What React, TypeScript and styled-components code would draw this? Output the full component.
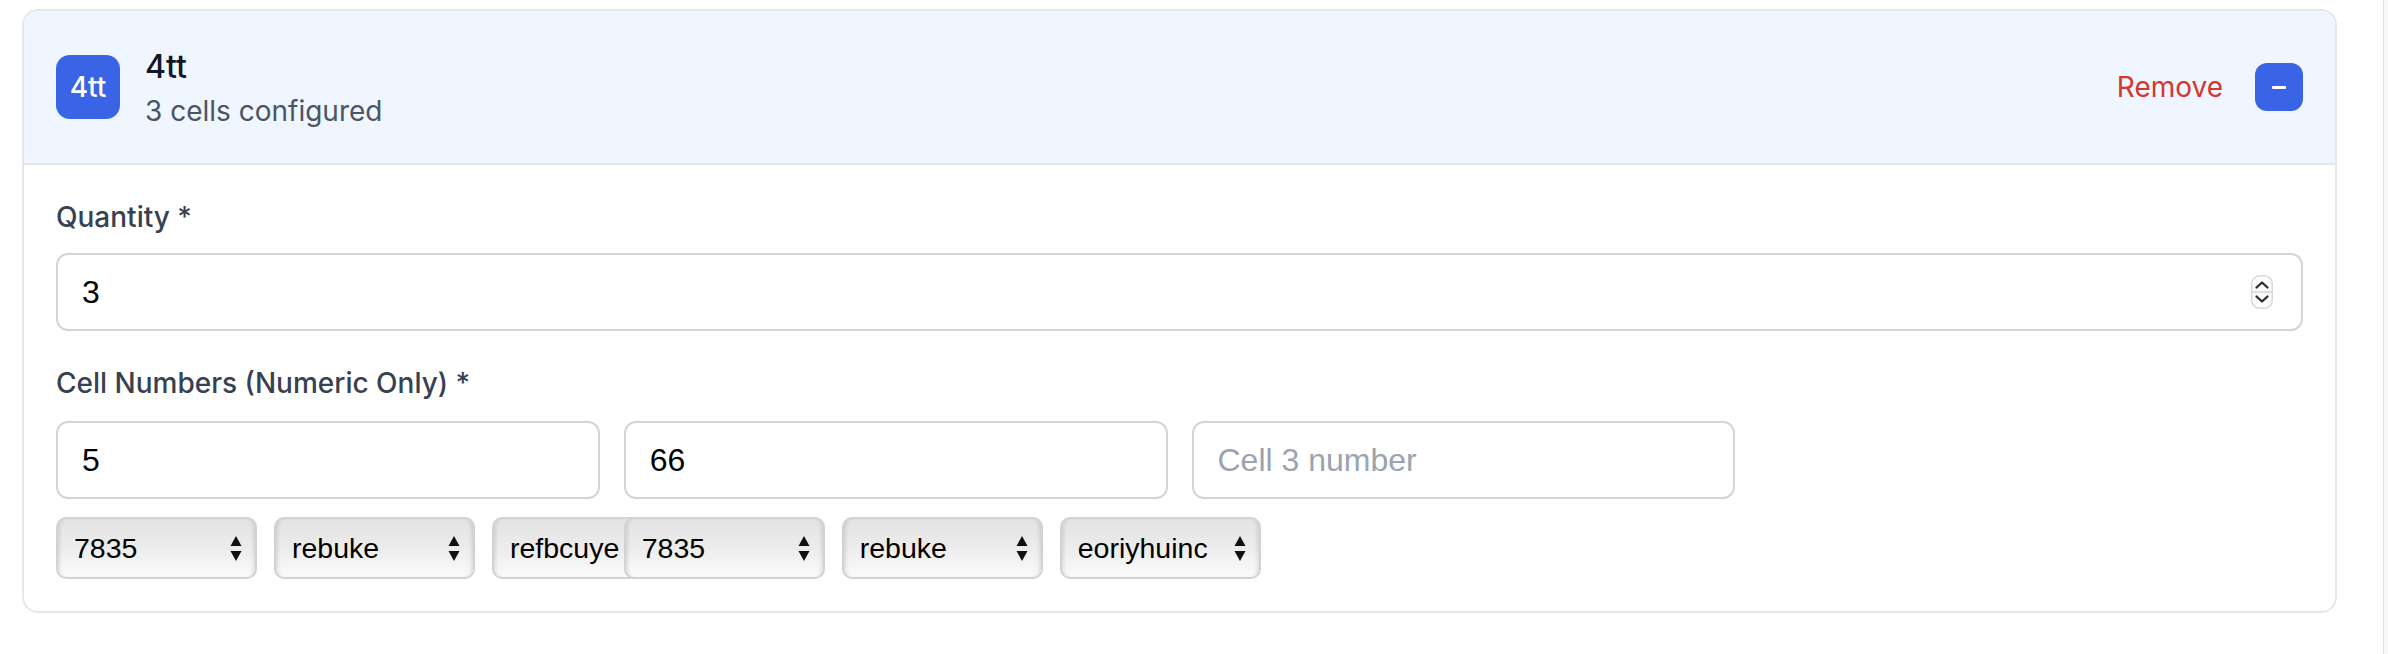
import React from "react";
import styled, { createGlobalStyle, css } from "styled-components";

const GlobalStyle = createGlobalStyle`
  html, body { margin: 0; padding: 0; background: #ffffff; }
  body {
    font-family: Inter, "Noto Sans", sans-serif;
    -webkit-font-smoothing: antialiased;
  }
  *, *::before, *::after { box-sizing: border-box; }
`;

const Page = styled.div`
  display: flex;
  width: 2388px;
  height: 654px;
  overflow: hidden;
`;

const Main = styled.main`
  flex: 1;
  min-width: 0;
  padding: 9px 0 0 22px;
`;

const Rail = styled.aside`
  width: 5px;
  flex-shrink: 0;
  border-left: 1px solid #e2e3e6;
  background: #f8f8f8;
`;

const Card = styled.section`
  width: 2315px;
  border: 2px solid #e5e7eb;
  border-radius: 16px;
  overflow: hidden;
  background: #ffffff;
`;

const Header = styled.header`
  display: flex;
  align-items: center;
  justify-content: space-between;
  padding: 32px;
  background: #eff6ff;
  border-bottom: 2px solid #e5e7eb;
`;

const Identity = styled.div`
  display: flex;
  align-items: center;
  gap: 25px;
`;

const Badge = styled.div`
  display: flex;
  align-items: center;
  justify-content: center;
  width: 64px;
  height: 64px;
  border-radius: 14px;
  background: #3864e5;
  color: #ffffff;
  font-size: 28px;
  font-weight: 500;
`;

const TitleBlock = styled.div`
  display: flex;
  flex-direction: column;
`;

const Title = styled.h2`
  margin: 0;
  font-size: 32px;
  line-height: 48px;
  font-weight: 500;
  color: #111827;
`;

const Subtitle = styled.p`
  margin: 0;
  font-size: 28px;
  line-height: 40px;
  color: #4b5563;
`;

const Actions = styled.div`
  display: flex;
  align-items: center;
  gap: 32px;
`;

const RemoveButton = styled.button`
  padding: 0;
  border: 0;
  background: none;
  font-family: inherit;
  font-size: 28px;
  line-height: 40px;
  color: #d4372c;
  cursor: pointer;
`;

const CollapseButton = styled.button`
  display: flex;
  align-items: center;
  justify-content: center;
  width: 48px;
  height: 48px;
  padding: 0;
  border: 0;
  border-radius: 12px;
  background: #3864e5;
  cursor: pointer;
`;

const MinusBar = styled.span`
  display: block;
  width: 14px;
  height: 3px;
  border-radius: 1px;
  background: #ffffff;
`;

const Body = styled.div`
  display: flex;
  flex-direction: column;
  gap: 32px;
  padding: 32px;
`;

const Field = styled.div`
  display: flex;
  flex-direction: column;
`;

const Label = styled.label<{ $gap?: number }>`
  font-size: 28px;
  line-height: 40px;
  font-weight: 500;
  color: #374151;
  margin-bottom: ${(p) => p.$gap ?? 16}px;
`;

const fieldFrame = css`
  height: 78px;
  border: 2px solid #d1d5db;
  border-radius: 12px;
  background: #ffffff;
  font-family: "Liberation Sans", Arial, sans-serif;
  font-size: 32px;
  color: #000000;
`;

const TextInput = styled.input`
  ${fieldFrame};
  width: 100%;
  padding: 0 24px;
  outline: none;
  &::placeholder { color: #9ca3af; }
`;

const NumberShell = styled.div`
  ${fieldFrame};
  display: flex;
  align-items: center;
  padding: 0 28px 0 24px;
`;

const BareInput = styled.input`
  flex: 1;
  min-width: 0;
  border: 0;
  padding: 0;
  outline: none;
  background: transparent;
  font: inherit;
  color: inherit;
`;

const Grid = styled.div<{ $top?: number }>`
  display: grid;
  grid-template-columns: repeat(4, 1fr);
  gap: 24px;
  margin-top: ${(p) => p.$top ?? 0}px;
`;

const SelectGroup = styled.div`
  display: flex;
  gap: 17px;
  min-width: 0;
`;

const SelectBox = styled.div`
  display: flex;
  align-items: center;
  flex-shrink: 0;
  width: 201px;
  height: 62px;
  padding: 0 13px 0 16px;
  border: 2px solid #d0d4d9;
  border-radius: 10px;
  background: linear-gradient(#e3e3e3 0%, #ececec 50%, #fbfbfb 100%);
  box-shadow: inset 4px 0 4px -3px rgba(0, 0, 0, 0.14),
    inset -4px 0 4px -3px rgba(0, 0, 0, 0.14);
`;

const NativeSelect = styled.select`
  flex: 1;
  min-width: 0;
  height: 100%;
  padding: 0;
  border: 0;
  outline: none;
  background: transparent;
  appearance: none;
  -webkit-appearance: none;
  font-family: "Liberation Sans", Arial, sans-serif;
  font-size: 28.5px;
  color: #000000;
`;

const Spinner = () => (
  <svg width="22" height="34" viewBox="0 0 22 34" aria-hidden="true">
    <rect x="0.75" y="0.75" width="20.5" height="32.5" rx="8" fill="#fbfbfb" stroke="#d9d9d9" strokeWidth="1.5" />
    <line x1="1" y1="17" x2="21" y2="17" stroke="#d6d6d6" strokeWidth="1.5" />
    <polyline points="5.5,12.5 11,7.5 16.5,12.5" fill="none" stroke="#2a2a2a" strokeWidth="2.2" strokeLinecap="round" strokeLinejoin="round" />
    <polyline points="5.5,21.5 11,26.5 16.5,21.5" fill="none" stroke="#2a2a2a" strokeWidth="2.2" strokeLinecap="round" strokeLinejoin="round" />
  </svg>
);

const UpDown = () => (
  <svg width="12" height="25" viewBox="0 0 12 25" aria-hidden="true">
    <polygon points="6,0 11.5,10 0.5,10" fill="#111" />
    <polygon points="0.5,15 11.5,15 6,25" fill="#111" />
  </svg>
);

const OPTIONS = ["7835", "rebuke", "refbcuye", "eoriyhuinc"];

const Dropdown = ({ value }: { value: string }) => (
  <SelectBox>
    <NativeSelect defaultValue={value}>
      {OPTIONS.map((o) => (
        <option key={o} value={o}>
          {o}
        </option>
      ))}
    </NativeSelect>
    <UpDown />
  </SelectBox>
);

const cells = [
  { value: "5", selects: ["7835", "rebuke", "refbcuye"] },
  { value: "66", selects: ["7835", "rebuke", "eoriyhuinc"] },
  { value: "", selects: [] as string[] },
];

export default function App() {
  return (
    <>
      <GlobalStyle />
      <Page>
        <Main>
          <Card>
            <Header>
              <Identity>
                <Badge>4tt</Badge>
                <TitleBlock>
                  <Title>4tt</Title>
                  <Subtitle>3 cells configured</Subtitle>
                </TitleBlock>
              </Identity>
              <Actions>
                <RemoveButton type="button">Remove</RemoveButton>
                <CollapseButton type="button" aria-label="Collapse">
                  <MinusBar />
                </CollapseButton>
              </Actions>
            </Header>
            <Body>
              <Field>
                <Label>Quantity *</Label>
                <NumberShell>
                  <BareInput type="text" defaultValue="3" />
                  <Spinner />
                </NumberShell>
              </Field>
              <Field>
                <Label $gap={18}>Cell Numbers (Numeric Only) *</Label>
                <Grid>
                  {cells.map((c, i) => (
                    <TextInput
                      key={i}
                      type="text"
                      defaultValue={c.value}
                      placeholder={`Cell ${i + 1} number`}
                    />
                  ))}
                </Grid>
                <Grid $top={18}>
                  {cells.map((c, i) => (
                    <SelectGroup key={i}>
                      {c.selects.map((s, j) => (
                        <Dropdown key={j} value={s} />
                      ))}
                    </SelectGroup>
                  ))}
                </Grid>
              </Field>
            </Body>
          </Card>
        </Main>
        <Rail />
      </Page>
    </>
  );
}
